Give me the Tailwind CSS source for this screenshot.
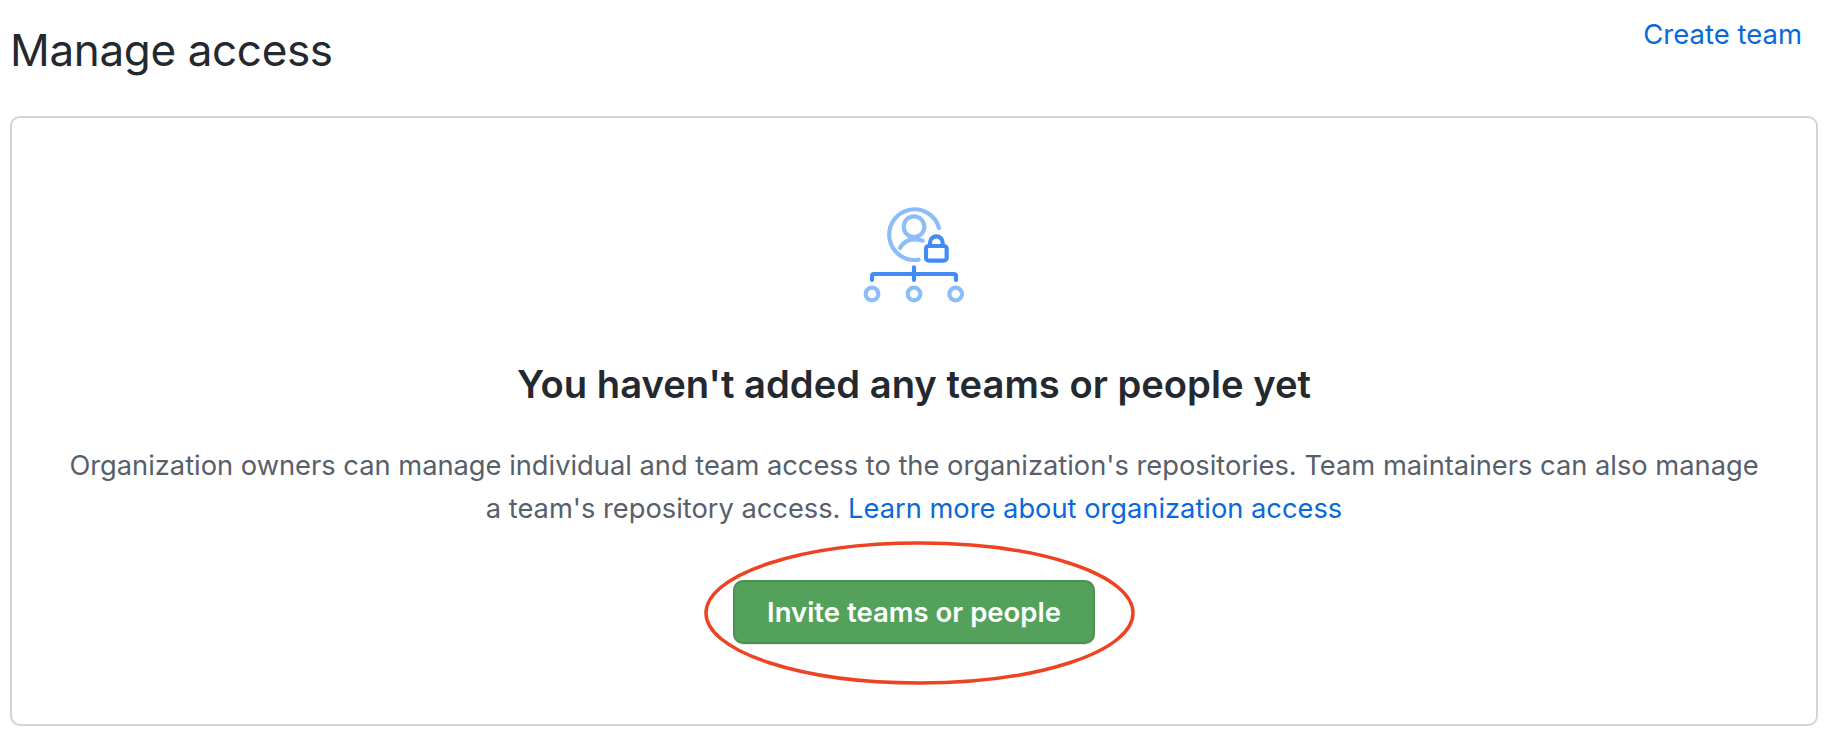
<!DOCTYPE html>
<html lang="en">
<head>
    <meta charset="UTF-8">
    <title>Manage access</title>
    <script src="https://cdn.jsdelivr.net/npm/@tailwindcss/browser@4"></script>
</head>
<body class="bg-white font-['Inter',sans-serif] overflow-hidden">
    <div class="relative h-[748px] w-[1834px] px-[10px]">
        <div class="flex h-[116px] items-start justify-between pr-[22px]">
            <h1 class="mt-[23px] text-[44px] leading-[54px] font-normal tracking-[-0.35px] text-[#24292f]">Manage access</h1>
            <a href="#" class="mt-[16px] text-[27.5px] leading-[36px] text-[#0969da]">Create team</a>
        </div>

        <div class="flex h-[610px] w-[1808px] flex-col items-center rounded-[10px] border-2 border-[#d0d5dd] pt-[72px]">
            <svg class="ml-[2px] h-[130px] w-[150px]" viewBox="0 0 450 390" fill="none" stroke-width="12.5" stroke-linecap="round" stroke-linejoin="round">
                <path d="M236 209 A76 76 0 1 1 297 114" stroke="#8cbdfb" />
                <circle cx="222" cy="110" r="31" stroke="#8cbdfb" />
                <path d="M180 174 C190 156 206 148 222 148 C232 148 240 149 248 152" stroke="#8cbdfb" />
                <rect x="258" y="168" width="62" height="44" rx="8" stroke="#428bf6" />
                <path d="M270 168 V158 A19 19 0 0 1 308 158 V168" stroke="#428bf6" />
                <path d="M96 270 V258 Q96 252 102 252 H342 Q348 252 348 258 V270 M222 232 V270" stroke="#428bf6" />
                <circle cx="96" cy="312" r="19" stroke="#8cbdfb" />
                <circle cx="222" cy="312" r="19" stroke="#8cbdfb" />
                <circle cx="347" cy="312" r="19" stroke="#8cbdfb" />
            </svg>

            <h2 class="mt-[39px] text-[38.2px] leading-[50px] font-semibold text-[#24292f]">You haven't added any teams or people yet</h2>
            <p class="mt-[35px] w-[1700px] text-center text-[27.27px] leading-[43px] text-[#57606a]">
                Organization owners can manage individual and team access to the organization's repositories. Team maintainers can also manage a team's repository access.
                <a href="#" class="text-[#0969da]">Learn more about organization access</a>
            </p>
            <button class="mt-[50px] h-[64px] w-[362px] rounded-[10px] border-2 border-[#4a9050] bg-[#53a15b] text-[27.5px] leading-[60px] font-semibold text-white shadow-[0_1px_0_rgba(27,31,36,0.1)]">Invite teams or people</button>
        </div>

        <svg class="absolute top-[538px] left-[700px] h-[150px] w-[440px]" viewBox="0 0 440 150" fill="none">
            <ellipse cx="219.500" cy="75" rx="213.500" ry="70" stroke="#ee4323" stroke-width="3.5" />
        </svg>
    </div>
</body>
</html>
